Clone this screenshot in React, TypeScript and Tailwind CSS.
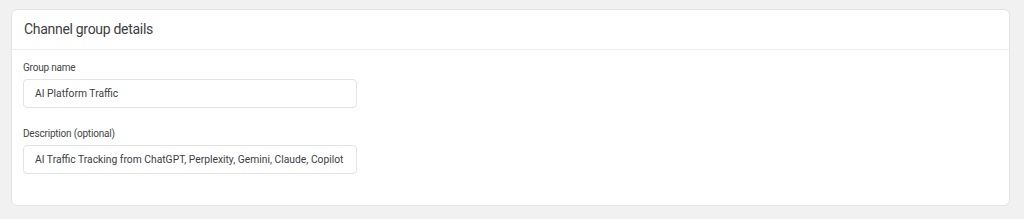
import React from "react";

export default function App() {
  return (
    <div
      className="w-[1024px] h-[219px] bg-[#f1f1f1] pl-[11px] pr-[14px] pt-[9px]"
      style={{ fontFamily: "Roboto, 'Liberation Sans', sans-serif" }}
    >
      <div className="h-[197px] bg-white border border-[#e3e3e3] rounded-[6px] flex flex-col">
        <div className="h-[40px] border-b border-[#ececec] flex items-center pl-[12px]">
          <span className="text-[14px] text-[#3c4043] tracking-[-0.3px]">Channel group details</span>
        </div>
        <div className="flex flex-col pl-[11px] pt-[11px]">
          <label className="text-[10px] text-[#444746] leading-[14px] tracking-[-0.2px]">Group name</label>
          <div className="mt-[4px] w-[334px] h-[29px] border border-[#e3e3e3] rounded-[4px] flex items-center pl-[11px]">
            <span className="text-[10.3px] text-[#3c4043]">AI Platform Traffic</span>
          </div>
          <label className="mt-[19px] text-[10px] text-[#444746] leading-[14px] tracking-[-0.2px]">Description (optional)</label>
          <div className="mt-[4px] w-[334px] h-[29px] border border-[#e3e3e3] rounded-[4px] flex items-center pl-[11px] pr-[11px] overflow-hidden">
            <span className="text-[10.3px] text-[#3c4043] whitespace-nowrap overflow-hidden">
              AI Traffic Tracking from ChatGPT, Perplexity, Gemini, Claude, Copilot
            </span>
          </div>
        </div>
      </div>
    </div>
  );
}
